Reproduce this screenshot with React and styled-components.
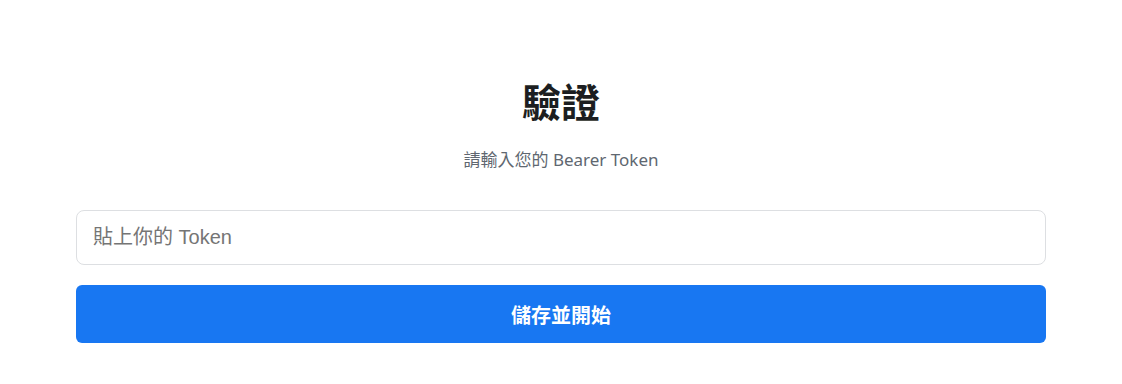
import React, { useState } from "react";
import styled, { createGlobalStyle } from "styled-components";

const GlobalStyle = createGlobalStyle`
  body {
    margin: 0;
    background: #ffffff;
    font-family: "Noto Sans", "Noto Sans CJK TC", sans-serif;
  }
`;

const Page = styled.div`
  display: flex;
  justify-content: center;
  padding: 76px 76px 0;
`;

const Card = styled.div`
  width: 100%;
  max-width: 970px;
  display: flex;
  flex-direction: column;
  align-items: stretch;
`;

const Title = styled.h1`
  margin: 0;
  text-align: center;
  font-size: 39px;
  font-weight: 700;
  line-height: 52px;
  color: #1c1e21;
`;

const Subtitle = styled.p`
  margin: 20px 0 0;
  text-align: center;
  font-size: 17px;
  line-height: 24px;
  color: #606770;
`;

const Form = styled.form`
  display: flex;
  flex-direction: column;
  gap: 20px;
  margin-top: 38px;
`;

const TokenInput = styled.input`
  box-sizing: border-box;
  height: 55px;
  padding: 0 16px;
  border: 1px solid #dddfe2;
  border-radius: 8px;
  font-family: "Liberation Sans", "Noto Sans CJK TC", sans-serif;
  font-size: 20px;
  color: #1c1e21;
  outline: none;

  &::placeholder {
    color: #757575;
  }
`;

const SubmitButton = styled.button`
  height: 58px;
  border: none;
  border-radius: 6px;
  background: #1877f2;
  color: #ffffff;
  font-family: "Noto Sans", "Noto Sans CJK TC", sans-serif;
  font-size: 20px;
  font-weight: 700;
  cursor: pointer;
`;

export default function App() {
  const [token, setToken] = useState("");

  return (
    <>
      <GlobalStyle />
      <Page>
        <Card>
          <Title>驗證</Title>
          <Subtitle>請輸入您的 Bearer Token</Subtitle>
          <Form onSubmit={(e) => e.preventDefault()}>
            <TokenInput
              type="text"
              placeholder="貼上你的 Token"
              value={token}
              onChange={(e) => setToken(e.target.value)}
            />
            <SubmitButton type="submit">儲存並開始</SubmitButton>
          </Form>
        </Card>
      </Page>
    </>
  );
}
